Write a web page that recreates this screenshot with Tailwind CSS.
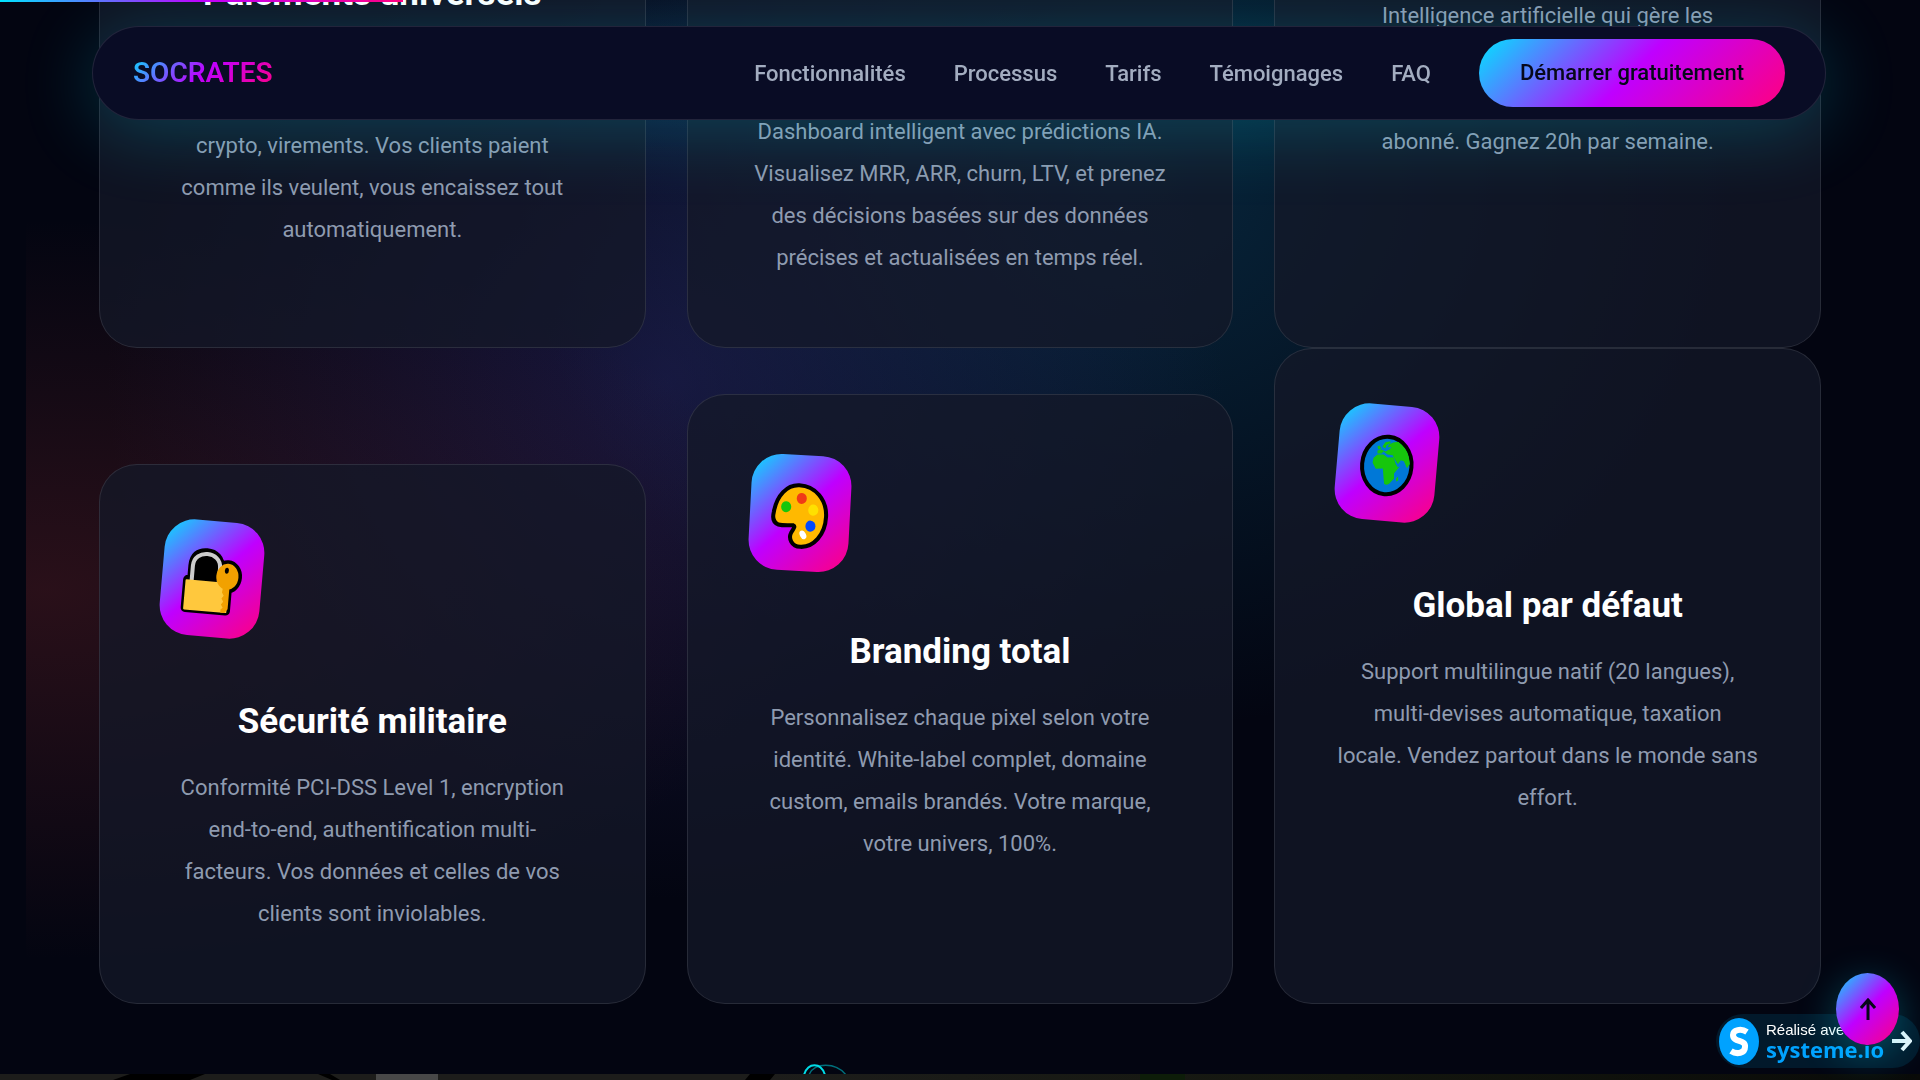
<!DOCTYPE html>
<html lang="fr">
<head>
    <meta charset="UTF-8">
    <meta name="viewport" content="width=device-width, initial-scale=1.0">
    <title>SOCRATES</title>
    <script src="https://cdn.jsdelivr.net/npm/@tailwindcss/browser@4"></script>
</head>
<body class="relative h-screen overflow-hidden bg-[#030511] font-[Roboto,sans-serif] text-[#8f9bb0]">
    <!-- Scroll progress -->
    <div class="fixed top-0 left-0 z-50 h-[2px] w-[21%] bg-[linear-gradient(90deg,#00e5ff,#bf00ff,#ff0080)]"></div>

    <!-- Navigation -->
    <nav class="fixed top-[26px] right-[94px] left-[92px] z-40 flex items-center justify-between rounded-full border border-white/10 bg-[#090c25] py-3 pr-10 pl-10 shadow-[0_10px_75px_rgba(0,229,255,0.22)]">
        <a href="#" class="bg-[linear-gradient(135deg,#00e5ff,#bf00ff,#ff0080)] bg-clip-text text-[28px] font-semibold text-transparent">SOCRATES</a>
        <div class="flex items-center gap-12 text-[22px] font-medium text-[#a3adc0]">
            <a href="#fonctionnalites">Fonctionnalités</a>
            <a href="#processus">Processus</a>
            <a href="#tarifs">Tarifs</a>
            <a href="#temoignages">Témoignages</a>
            <a href="#faq">FAQ</a>
            <a href="#demarrer" class="rounded-full bg-[linear-gradient(135deg,#00e5ff,#bf00ff,#ff0080)] px-[41px] leading-[68px] text-[#06081a]">Démarrer gratuitement</a>
        </div>
    </nav>

    <section id="fonctionnalites" class="relative h-[1074px] overflow-hidden px-[99px]">
        <!-- Aurora glow -->
        <div class="absolute inset-y-0 right-[26px] left-[26px] bg-[radial-gradient(ellipse_760px_370px_at_20px_590px,rgba(110,35,40,0.36),transparent),radial-gradient(ellipse_560px_520px_at_640px_380px,rgba(50,45,120,0.42),transparent),radial-gradient(ellipse_620px_560px_at_1110px_170px,rgba(12,80,115,0.44),transparent)]"></div>

        <div class="relative grid grid-cols-3 grid-rows-[348px] gap-[41px] text-center text-[22px] leading-[42px]">
            <article class="flex flex-col justify-end rounded-b-[38px] border border-t-0 border-white/10 bg-[#141828]/75 px-[40px] pb-24">
                <h3 class="text-[35px] leading-[50px] font-bold text-white">Paiements universels</h3>
                <p class="mt-[106px]">crypto, virements. Vos clients paient<br>comme ils veulent, vous encaissez tout<br>automatiquement.</p>
            </article>
            <article class="flex flex-col justify-end rounded-b-[38px] border border-t-0 border-white/10 bg-[#141828]/75 px-[40px] pb-[68px]">
                <p>Dashboard intelligent avec prédictions IA.<br>Visualisez MRR, ARR, churn, LTV, et prenez<br>des décisions basées sur des données<br>précises et actualisées en temps réel.</p>
            </article>
            <article class="flex flex-col justify-end gap-[84px] rounded-b-[38px] border border-t-0 border-white/10 bg-[#141828]/75 px-[40px] pb-[184px]">
                <p>Intelligence artificielle qui gère les</p>
                <p>abonné. Gagnez 20h par semaine.</p>
            </article>
        </div>

        <div class="relative grid grid-cols-3 items-end gap-[41px] text-center text-[22px] leading-[42px]">
            <article class="rounded-[38px] border border-white/10 bg-[#141828]/75 px-[40px] pt-14 pb-[68px]">
                <div class="ml-[22px] h-[116px] w-[100px] rotate-5 rounded-[30px] bg-[linear-gradient(135deg,#00e5ff,#bf00ff,#ff0080)]">
                    <svg viewBox="0 0 98 115" class="h-full w-full">
                        <path d="M29 61V46C29 36 34 32 42 32S56 37 56 46V61M25 60H65V88H25ZM64 42A10 12 0 1 1 64 66A10 12 0 1 1 64 42" fill="#000" stroke="#000" stroke-width="9" stroke-linejoin="round"/>
                        <path d="M29 62V46C29 29 56 29 56 46V62" fill="none" stroke="#ccc" stroke-width="4"/>
                        <rect x="23" y="60" width="43" height="30" rx="1" fill="#ffc83d"/>
                        <path d="M61 62H67V86L64 90H60V87L62 85L60 82L62 79L60 76L62 73L60 70Z" fill="#f2a100"/>
                        <ellipse cx="64" cy="54" rx="11" ry="13" fill="#f2a100"/>
                        <ellipse cx="63" cy="48" rx="2" ry="3" fill="#000"/>
                    </svg>
                </div>
                <h3 class="mt-[60px] text-[35px] leading-[50px] font-bold text-white">Sécurité militaire</h3>
                <p class="mt-5">Conformité PCI-DSS Level 1, encryption<br>end-to-end, authentification multi-<br>facteurs. Vos données et celles de vos<br>clients sont inviolables.</p>
            </article>
            <article class="rounded-[38px] border border-white/10 bg-[#141828]/75 px-[40px] pt-15 pb-[138px]">
                <div class="ml-[22px] h-[116px] w-[100px] rotate-3 rounded-[30px] bg-[linear-gradient(135deg,#00e5ff,#bf00ff,#ff0080)]">
                    <svg viewBox="0 0 98 115" class="h-full w-full">
                        <path d="M47 30C63 30 75 43 75 60C75 78 64 91 51 91C42 91 39 83 41 78C42 75 46 71 43 70C39 70 33 71 28 70C23 68 22 63 23 58C25 41 35 30 47 30Z" fill="#ffb900" stroke="#000" stroke-width="4"/>
                        <ellipse cx="35" cy="52" rx="5" ry="5.500" fill="#16c60c"/>
                        <ellipse cx="50" cy="43" rx="5" ry="5.500" fill="#f03a17"/>
                        <ellipse cx="62" cy="54" rx="5" ry="5.500" fill="#ffe000"/>
                        <ellipse cx="60" cy="70" rx="5" ry="5.500" fill="#0048ff"/>
                        <ellipse cx="53" cy="79" rx="3" ry="4.500" transform="rotate(-30 53 79)" fill="#fff"/>
                    </svg>
                </div>
                <h3 class="mt-14 text-[35px] leading-[50px] font-bold text-white">Branding total</h3>
                <p class="mt-5">Personnalisez chaque pixel selon votre<br>identité. White-label complet, domaine<br>custom, emails brandés. Votre marque,<br>votre univers, 100%.</p>
            </article>
            <article class="rounded-[38px] border border-white/10 bg-[#141828]/75 px-[40px] pt-14 pb-[184px]">
                <div class="ml-[22px] h-[116px] w-[100px] rotate-5 rounded-[30px] bg-[linear-gradient(135deg,#00e5ff,#bf00ff,#ff0080)]">
                    <svg viewBox="0 0 98 115" class="h-full w-full">
                        <ellipse cx="49" cy="60" rx="24.500" ry="28.500" fill="#0078d7" stroke="#000" stroke-width="4"/>
                        <g transform="rotate(-6 49 60)" fill="#16c60c">
                            <path d="M35 57L36 52L40 49L46 49L50 52L56 52L58 59L60 62L62 61L56 68L56 73L51 78Q48 80 46 78L45 63L38 63Z"/>
                            <path d="M40 48L40 45L44 44L48 46L52 44L54 42L50 42L52 39Q57 36 61 37Q69 43 71 52L72 59L69 63L66 56L63 55L60 59L57 54L55 50L50 49L46 46L44 48Z"/>
                            <path d="M45 41L48 37L53 36L53 38L49 40L48 43ZM40 41L42 40L44 43L41 44ZM58 73L60 71L60 75L58 76Z"/>
                        </g>
                    </svg>
                </div>
                <h3 class="mt-[60px] text-[35px] leading-[50px] font-bold text-white">Global par défaut</h3>
                <p class="mt-5">Support multilingue natif (20 langues),<br>multi-devises automatique, taxation<br>locale. Vendez partout dans le monde sans<br>effort.</p>
            </article>
        </div>

        <!-- Orbit animation -->
        <svg viewBox="0 0 46 10" class="absolute bottom-0 left-[802px] h-[10px] w-[46px]" fill="none">
            <path d="M7 11C12 -2 34 -2 44 11" stroke="#00707c" stroke-width="1.500"/>
            <path d="M2 11C6 -2 19 -2 23 11" stroke="#00dce6" stroke-width="2"/>
        </svg>
    </section>

    <!-- Video strip -->
    <div class="h-[6px] bg-[linear-gradient(90deg,#1d1d1b_40%,#14170f,#090a08)]">
        <svg viewBox="0 0 1920 6" preserveAspectRatio="none" class="h-full w-full">
            <path d="M113 6L130 0H205L190 6ZM318 0H330L340 6H332ZM745 6L750 0H775L770 6Z" fill="#000"/>
            <path d="M376 0H438V6H376Z" fill="#484848"/>
            <path d="M1140 0H1185V6H1140Z" fill="#0d1d09"/>
        </svg>
    </div>

    <!-- Made with badge -->
    <a href="#" class="fixed right-0 bottom-3 z-40 flex h-[54px] w-[204px] items-center rounded-full bg-[#02192b] pl-[3px]">
        <svg viewBox="0 0 40 47" class="h-[47px] w-[40px]">
            <ellipse cx="20" cy="23.500" rx="20" ry="23.500" fill="#00a2ff"/>
            <path d="M28 14C22 10 14 12 14 17C14 25 27 21 26 29C26 35 18 37 12 33" fill="none" stroke="#fff" stroke-width="6"/>
        </svg>
        <span class="ml-[7px] flex flex-col">
            <span class="font-[Liberation_Sans,sans-serif] text-[15px] leading-[16px] text-white">Réalisé avec</span>
            <span class="font-[Open_Sans,sans-serif] text-[22px] leading-[22px] font-bold text-[#00a2ff]">systeme.io</span>
        </span>
        <svg viewBox="0 0 20 22" class="absolute right-2 h-[22px] w-[20px]" fill="none" stroke="#e9f6fa" stroke-width="4">
            <path d="M0 11H18M10 2L18 11L10 20"/>
        </svg>
    </a>

    <!-- Back to top -->
    <button type="button" aria-label="Retour en haut" class="fixed right-[21px] bottom-[35px] z-50 flex h-[72px] w-[63px] items-center justify-center rounded-[50%] bg-[linear-gradient(135deg,#00e5ff,#bf00ff,#ff0080)] shadow-[0_10px_40px_rgba(0,229,255,0.3)]">
        <svg viewBox="0 0 16 22" class="h-[22px] w-[16px]" fill="none" stroke="#06081a" stroke-width="3">
            <path d="M8 22V2M1 10L8 2L15 10"/>
        </svg>
    </button>
</body>
</html>
